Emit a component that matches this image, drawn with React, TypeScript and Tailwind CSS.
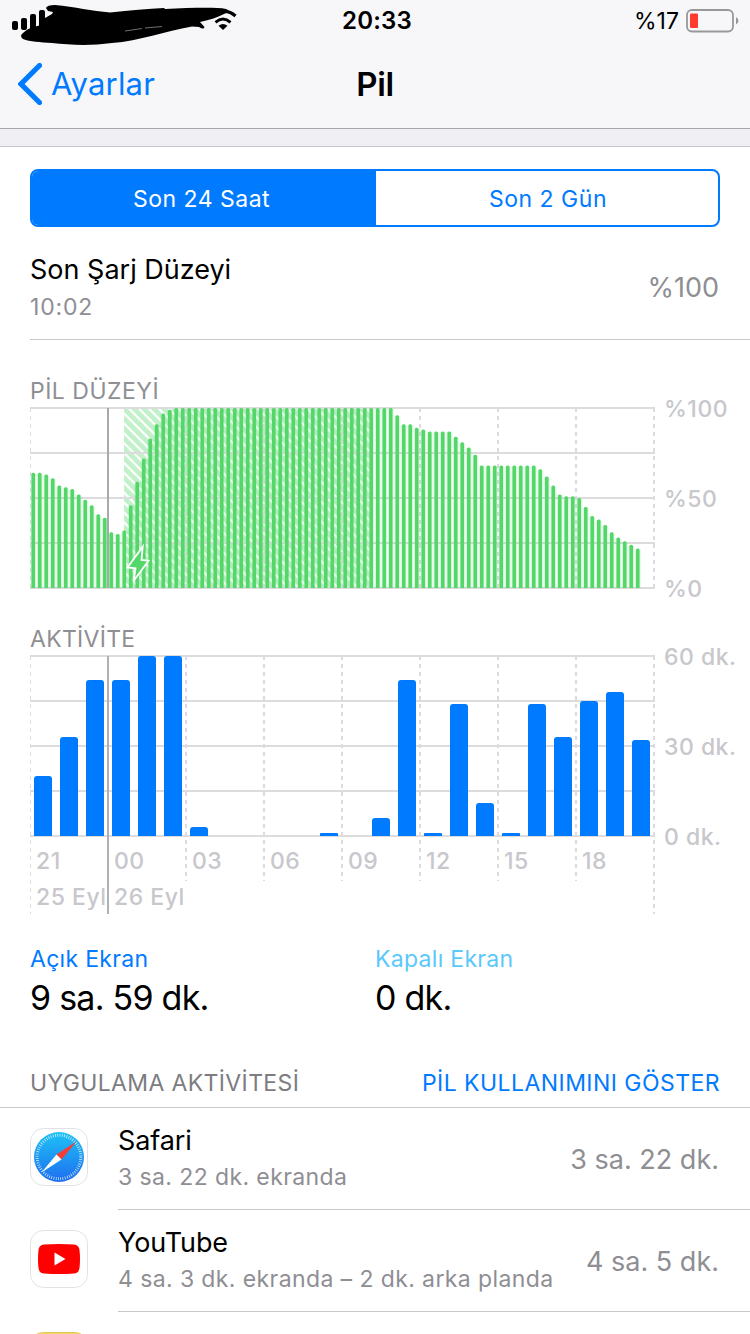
const FONT = 'font-["Inter","Liberation_Sans",sans-serif]';

const HOURS = ['21', '00', '03', '06', '09', '12', '15', '18'];

// battery level, one sample per quarter of an hour
const LEVELS = [
  64, 64, 63, 61, 57, 56, 55, 52, 49, 46, 41, 39, 31, 30, 32, 46, 59, 72, 83, 91, 97, 99,
  ...Array<number>(34).fill(100),
  96, 91, 91, 89, 88, 87, 87, 87, 87, 84, 81, 78, 74,
  68, 68, 68, 68, 68, 68, 68, 68, 68,
  66, 62, 57, 52, 51, 51, 50, 45, 40, 38, 35, 31, 28, 26, 24, 22,
];

// minutes of screen time per hour
const MINUTES = [
  20, 33, 52, 52, 60, 60, 3, 0, 0, 0, 0, 1, 0, 6, 52, 1, 44, 11, 1, 44, 33, 45, 48, 32,
];

type AppUsage = { name: string; detail: string; total: string; icon: React.ReactNode };

const APPS: AppUsage[] = [
  { name: 'Safari', detail: '3 sa. 22 dk. ekranda', total: '3 sa. 22 dk.', icon: <SafariIcon /> },
  { name: 'YouTube', detail: '4 sa. 3 dk. ekranda – 2 dk. arka planda', total: '4 sa. 5 dk.', icon: <YouTubeIcon /> },
];

export default function App() {
  return (
    <div className={`h-[1334px] w-[750px] overflow-hidden bg-white text-black ${FONT}`}>
      <header className="h-[129px] border-b border-[#a7a7ab] bg-[#f7f7f9]">
        <StatusBar />
        <NavBar />
      </header>
      <div className="h-[18px] border-b border-[#c8c7cc] bg-[#efeff4]" />

      <main>
        <div className="px-[30px] pt-[22px]">
          <Segments />
        </div>
        <LastCharge />
        <section className="pt-[35px] pl-[30px]">
          <h2 className="h-8 text-[23px] leading-8 tracking-[0.5px] text-[#8e8e93]">PİL DÜZEYİ</h2>
          <div className="flex">
            <BatteryChart />
            <AxisLabels labels={['%100', '%50', '%0']} />
          </div>
        </section>
        <section className="pt-[18px] pl-[30px]">
          <h2 className="h-8 text-[23px] leading-8 tracking-[0.3px] text-[#8e8e93]">AKTİVİTE</h2>
          <div className="flex">
            <ActivityChart />
            <AxisLabels labels={['60 dk.', '30 dk.', '0 dk.']} />
          </div>
        </section>
        <Totals />
        <AppList />
      </main>
    </div>
  );
}

function StatusBar() {
  return (
    <div className="flex h-10 items-start">
      <svg width="250" height="48" viewBox="0 0 250 48" className="-mr-[250px] shrink-0">
        <rect x="12" y="21" width="6" height="9" rx="2" />
        <rect x="21" y="18" width="6" height="12" rx="2" />
        <rect x="30" y="14" width="6" height="16" rx="2" />
        <rect x="39" y="10" width="6" height="20" rx="2" />
        <path d="M46 8 Q47 5 55 5 C75 7 92 11 110 12.5 C130 10 148 9 164 8 L165 9 C190 8 215 7 226 9 Q232 11 224 14 C218 17 210 20 200 22 L204.500 27 Q204 30 199 27 L192 26.500 C165 31 140 41 112 43 C90 46 70 45 52 43 C40 42 30 42 23 39 Q19 36 23 33 C29 27 38 26 45 24 L45 18 L52 14 L53 12 L48 11 Z" />
        <path d="M125 31 L142 28.500 M145 28 L162 26.500" stroke="#bbb" strokeWidth="0.600" />
        <path d="M222 11.500 Q229.500 10.500 235.500 16" fill="none" stroke="#000" strokeWidth="3.200" strokeLinecap="butt" />
        <path d="M215.500 22.300 Q223 15.700 230.500 22.300" fill="none" stroke="#000" strokeWidth="3" />
        <path d="M218.500 25.800 Q223 22.300 227.500 25.800 L223 30 Z" />
      </svg>
      <div className="flex h-[42px] flex-1 items-center justify-center pl-[4px] text-[24px] font-semibold tracking-[0.2px]">
        20:33
      </div>
      <div className="-ml-[120px] flex h-[42px] w-[120px] items-center gap-[7px] pl-[4px]">
        <span className="w-[45px] text-[23px] whitespace-nowrap">%17</span>
        <svg width="54" height="24" viewBox="0 0 54 24" className="shrink-0">
          <rect x="1" y="1" width="46" height="21.500" rx="5" fill="none" stroke="#98989b" strokeWidth="1.800" />
          <rect x="4" y="4.500" width="8" height="14.500" rx="1" fill="#ff3b30" />
          <path d="M50 8 Q55 11.500 50 15.500 Z" fill="#98989b" />
        </svg>
      </div>
    </div>
  );
}

function NavBar() {
  return (
    <nav className="grid h-[88px] grid-cols-3 items-center">
      <a className="flex items-center gap-[9px] pl-[18px] text-[31px] tracking-[0.2px] text-[#007aff]">
        <svg width="24" height="42" viewBox="0 0 24 42">
          <path d="M21.500 2.500 L3 21 L21.500 39.500" fill="none" stroke="currentColor" strokeWidth="5.200" strokeLinecap="round" />
        </svg>
        Ayarlar
      </a>
      <h1 className="pt-[2px] text-center text-[33px] font-semibold tracking-[-0.3px]">Pil</h1>
    </nav>
  );
}

function Segments() {
  return (
    <div className="grid h-[58px] grid-cols-[344px_1fr] overflow-hidden rounded-[8px] border-2 border-[#007aff] text-[23px] tracking-[0.5px]">
      <button className="bg-[#007aff] pt-[2px] pr-[5px] text-white">Son 24 Saat</button>
      <button className="pt-[2px] pl-[2px] text-[#007aff]">Son 2 Gün</button>
    </div>
  );
}

function LastCharge() {
  return (
    <div className="ml-[30px] flex h-[113px] items-center justify-between border-b border-[#c8c7cc] pt-[10px] pr-[31px]">
      <div>
        <p className="text-[27px] leading-[38px]">Son Şarj Düzeyi</p>
        <p className="text-[23px] leading-9 tracking-[0.8px] text-[#8e8e93]">10:02</p>
      </div>
      <span className="text-[27px] text-[#8e8e93]">%100</span>
    </div>
  );
}

function AxisLabels({ labels }: { labels: string[] }) {
  return (
    <div className="-mt-[14px] flex h-[212px] flex-col justify-between pl-[8px] text-[23px] leading-8 font-medium tracking-[0.5px] whitespace-nowrap text-[#c7c7cc]">
      {labels.map((label) => (
        <span key={label}>{label}</span>
      ))}
    </div>
  );
}

function GridLines({ dashTo, edgeTo }: { dashTo: number; edgeTo: number }) {
  return (
    <g stroke="#dcdcde" strokeWidth="2">
      {[1, 46, 91, 136, 181].map((y) => (
        <line key={y} x1="0" x2="625" y1={y} y2={y} />
      ))}
      <g strokeDasharray="4 4">
        <line x1="0.5" x2="0.5" y1="1" y2={edgeTo} strokeWidth="1" />
        {[2, 3, 4, 5, 6, 7].map((i) => (
          <line key={i} x1={i * 78} x2={i * 78} y1="1" y2={dashTo} />
        ))}
        <line x1="624" x2="624" y1="1" y2={edgeTo} />
      </g>
    </g>
  );
}

function BatteryChart() {
  return (
    <svg width="626" height="182" viewBox="0 0 626 182" className="shrink-0">
      <defs>
        <pattern id="hatch" width="7" height="7" patternUnits="userSpaceOnUse" patternTransform="rotate(-45)">
          <rect width="7" height="7" fill="#fff" />
          <rect width="4.800" height="7" fill="#c1f0c9" />
        </pattern>
      </defs>
      <rect x="94" y="1" width="247" height="180" fill="url(#hatch)" />
      <GridLines dashTo={181} edgeTo={181} />
      <line x1="78" x2="78" y1="1" y2="181" stroke="#a9a9ab" strokeWidth="2" />
      {LEVELS.map((level, i) => {
        const top = 181 - level * 1.8;
        const x = 1.4 + i * 6.5;
        return (
          <g key={i}>
            <rect x={x - 1.2} y={top + 1} width="6.500" height={181 - top - 1} fill="#53d769" opacity="0.12" />
            <path d={`M${x} 181 V${top + 1.5} q0 -1.500 1.500 -1.500 h0.700 q1.500 0 1.500 1.500 V181 Z`} fill="#53d769" />
          </g>
        );
      })}
      <path d="M112.700 139.700 L97.500 160.500 L105.500 161.300 L103.700 173.700 L118.500 153.700 L111.500 153 Z" fill="#53d769" stroke="#fff" strokeWidth="1.800" />
    </svg>
  );
}

function ActivityChart() {
  return (
    <div className="w-[626px] shrink-0">
      <svg width="626" height="260" viewBox="0 0 626 260" className="-mb-[260px]">
        <GridLines dashTo={226} edgeTo={259} />
        <line x1="78" x2="78" y1="1" y2="259" stroke="#b0b0b2" strokeWidth="2" />
        {MINUTES.map((m, i) => {
          if (m === 0) return null;
          const x = 4 + i * 26;
          const r = Math.min(3, m);
          const top = 181 - m * 3;
          return (
            <path
              key={i}
              d={`M${x} 181 V${top + r} q0 ${-r} ${r} ${-r} h${18 - 2 * r} q${r} 0 ${r} ${r} V181 Z`}
              fill="#007aff"
            />
          );
        })}
      </svg>
      <div className="pt-[188px] text-[23px] leading-9 font-medium tracking-[0.5px] text-[#c7c7cc]">
        <div className="grid w-[624px] grid-cols-8">
          {HOURS.map((hour) => (
            <span key={hour} className="pl-[6px]">{hour}</span>
          ))}
        </div>
        <div className="flex whitespace-nowrap">
          <span className="w-[78px] pl-[6px]">25 Eyl</span>
          <span className="pl-[6px]">26 Eyl</span>
        </div>
      </div>
    </div>
  );
}

function Totals() {
  return (
    <div className="grid grid-cols-2 px-[30px] pt-[26px]">
      <div>
        <p className="text-[23px] leading-9 tracking-[0.3px] text-[#007aff]">Açık Ekran</p>
        <p className="text-[34px] leading-[42px] tracking-[-0.75px]">9 sa. 59 dk.</p>
      </div>
      <div>
        <p className="text-[23px] leading-9 tracking-[0.3px] text-[#5ac8fa]">Kapalı Ekran</p>
        <p className="text-[34px] leading-[42px] tracking-[-0.75px]">0 dk.</p>
      </div>
    </div>
  );
}

function AppList() {
  return (
    <section>
      <div className="flex h-[89px] items-end justify-between border-b border-[#c8c7cc] px-[30px] pb-[8px] text-[23px] leading-8">
        <h2 className="tracking-[0.37px] text-[#7c7c81]">UYGULAMA AKTİVİTESİ</h2>
        <a className="tracking-[0.45px] text-[#007aff]">PİL KULLANIMINI GÖSTER</a>
      </div>
      {APPS.map((app) => (
        <AppRow key={app.name} app={app} />
      ))}
      <div className="flex pl-[30px]">
        <div className="mt-5 h-[58px] w-[58px] rounded-[13px] border border-[#e3c65c] bg-[#f5d65f]" />
        <p className="pt-[17px] pl-[30px] text-[27px] leading-9 tracking-[0.4px]">Notlar</p>
      </div>
    </section>
  );
}

function AppRow({ app }: { app: AppUsage }) {
  return (
    <div className="flex h-[102px] pl-[30px]">
      <div className="w-[88px] pt-5">{app.icon}</div>
      <div className="flex flex-1 items-center justify-between border-b border-[#c8c7cc] pr-[31px] whitespace-nowrap">
        <div>
          <p className="text-[27px] leading-9 tracking-[-0.1px]">{app.name}</p>
          <p className="text-[23px] leading-9 tracking-[0.4px] text-[#8e8e93]">{app.detail}</p>
        </div>
        <span className="pt-[4px] text-[27px] text-[#8e8e93]">{app.total}</span>
      </div>
    </div>
  );
}

function SafariIcon() {
  return (
    <svg width="58" height="58" viewBox="0 0 58 58">
      <defs>
        <linearGradient id="sky" x1="0" x2="0" y1="0" y2="1">
          <stop offset="0" stopColor="#1ec2f5" />
          <stop offset="1" stopColor="#1e6ef0" />
        </linearGradient>
      </defs>
      <rect x="0.500" y="0.500" width="57" height="57" rx="13" fill="#fff" stroke="#e2e2e4" />
      <circle cx="29" cy="29" r="25" fill="url(#sky)" />
      <circle cx="29" cy="29" r="21.800" fill="none" stroke="#fff" strokeWidth="3" strokeDasharray="0.700 1.583" opacity="0.850" />
      <path d="M46.500 13.500 L26.500 26.500 L31.500 31.500 Z" fill="#f53d35" />
      <path d="M11.500 44.500 L26.500 26.500 L31.500 31.500 Z" fill="#fff" />
    </svg>
  );
}

function YouTubeIcon() {
  return (
    <svg width="58" height="58" viewBox="0 0 58 58">
      <rect x="0.500" y="0.500" width="57" height="57" rx="13" fill="#fff" stroke="#e2e2e4" />
      <path d="M14 14.500 Q29 13.500 44 14.500 Q49 15 49.500 20 Q50.500 29 49.500 38 Q49 43 44 43.500 Q29 44.500 14 43.500 Q9 43 8.500 38 Q7.500 29 8.500 20 Q9 15 14 14.500 Z" fill="#f00" />
      <path d="M24.500 22.500 L35.500 29 L24.500 35.500 Z" fill="#fff" />
    </svg>
  );
}
